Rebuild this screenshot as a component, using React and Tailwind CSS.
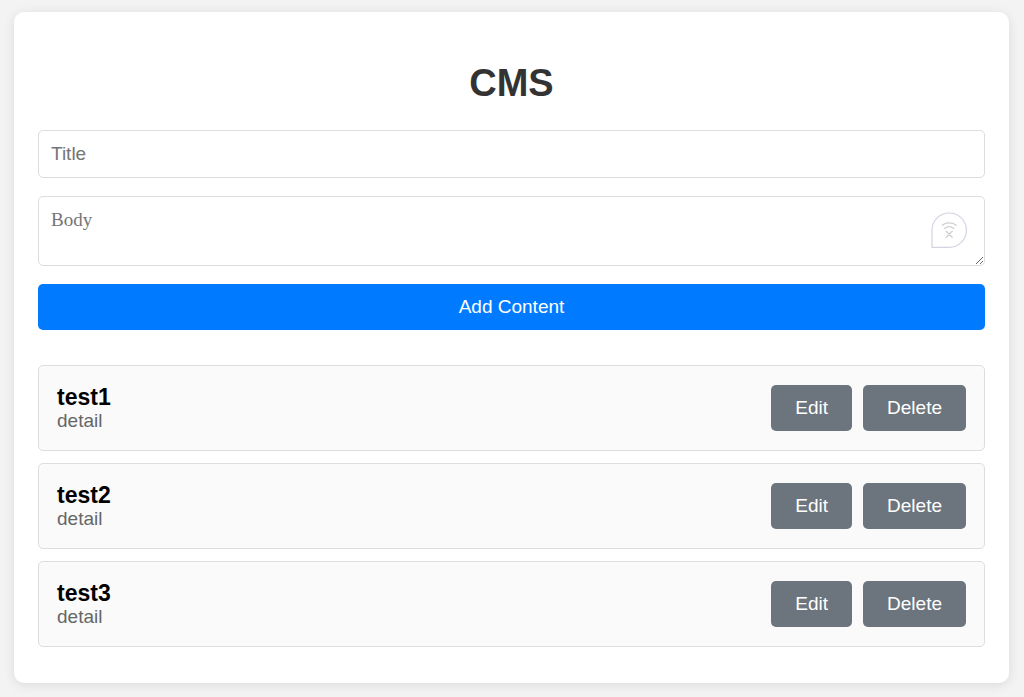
import { useState } from 'react';

const initialItems = [
  { id: 1, title: 'test1', body: 'detail' },
  { id: 2, title: 'test2', body: 'detail' },
  { id: 3, title: 'test3', body: 'detail' },
];

const OfflineBadge = () => (
  <svg
    className="absolute top-4 right-[18px] w-9 h-9 pointer-events-none"
    viewBox="0 0 36 36"
    fill="none"
    aria-hidden="true"
  >
    <path
      d="M1 35.4V18A17.2 17.2 0 1 1 18.2 35.4Z"
      fill="white"
      stroke="#d3d3e2"
      strokeWidth="1.2"
    />
    <g stroke="#d0d0d0" strokeWidth="1.3" strokeLinecap="round">
      <path d="M11.2 13.2C15.2 10.1 21.2 10.1 25.2 13.2" />
      <path d="M13.4 16.4C16.2 14.3 20.2 14.3 23 16.4" />
      <path d="M15.2 19.3L21.2 25.3M21.2 19.3L15.2 25.3" />
    </g>
  </svg>
);

const ContentItem = ({ item, onEdit, onDelete }) => (
  <li className="flex items-center justify-between p-[18px] bg-[#fafafa] border border-[#ddd] rounded-[5px]">
    <div>
      <h2 className="text-[23px] leading-[26px] font-bold text-black">{item.title}</h2>
      <p className="text-[19px] leading-[22px] text-[#666]">{item.body}</p>
    </div>
    <div className="flex gap-[11px]">
      <button
        type="button"
        onClick={() => onEdit(item)}
        className="px-6 py-3 text-[19px] leading-[22px] text-white bg-[#6c757d] rounded-[5px]"
      >
        Edit
      </button>
      <button
        type="button"
        onClick={() => onDelete(item.id)}
        className="px-6 py-3 text-[19px] leading-[22px] text-white bg-[#6c757d] rounded-[5px]"
      >
        Delete
      </button>
    </div>
  </li>
);

const App = () => {
  const [items, setItems] = useState(initialItems);
  const [title, setTitle] = useState('');
  const [body, setBody] = useState('');

  const handleSubmit = (e) => {
    e.preventDefault();
    if (!title) return;
    setItems([...items, { id: Date.now(), title, body }]);
    setTitle('');
    setBody('');
  };

  const handleDelete = (id) => {
    setItems(items.filter((item) => item.id !== id));
  };

  const handleEdit = (item) => {
    setTitle(item.title);
    setBody(item.body);
    handleDelete(item.id);
  };

  return (
    <div className="min-h-screen bg-[#f3f3f3] pt-3 pb-3 pl-[14px] pr-[15px] font-['Liberation_Sans',Arial,sans-serif]">
      <main className="bg-white rounded-[10px] px-6 pt-12 pb-9 shadow-[0_2px_12px_rgba(0,0,0,0.1)]">
        <h1 className="mb-6 text-[38px] leading-[46px] font-bold text-center text-[#333]">CMS</h1>

        <form onSubmit={handleSubmit} className="flex flex-col gap-[18px] mb-[35px]">
          <input
            type="text"
            aria-label="Title"
            placeholder="Title"
            value={title}
            onChange={(e) => setTitle(e.target.value)}
            className="w-full h-12 px-3 text-[19px] bg-white border border-[#ddd] rounded-[5px] placeholder:text-[#757575]"
          />
          <div className="relative flex">
            <textarea
              aria-label="Body"
              placeholder="Body"
              value={body}
              onChange={(e) => setBody(e.target.value)}
              className="w-full h-[70px] px-3 py-3 text-[19px] leading-[22px] font-['Liberation_Serif',serif] bg-white border border-[#ddd] rounded-[5px] resize-y placeholder:text-[#757575]"
            />
            <OfflineBadge />
          </div>
          <button
            type="submit"
            className="w-full py-3 text-[19px] leading-[22px] text-white bg-[#007bff] rounded-[5px]"
          >
            Add Content
          </button>
        </form>

        <ul className="flex flex-col gap-3">
          {items.map((item) => (
            <ContentItem key={item.id} item={item} onEdit={handleEdit} onDelete={handleDelete} />
          ))}
        </ul>
      </main>
    </div>
  );
};

export default App;
